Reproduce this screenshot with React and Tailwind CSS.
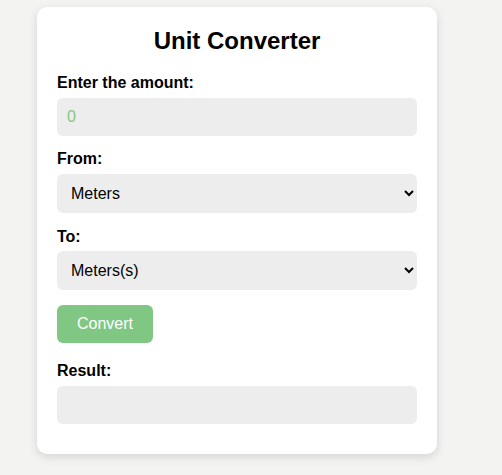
import { useState } from "react";

export default function App() {
    const [amount, setAmount] = useState("");
    const [from, setFrom] = useState("meters");
    const [to, setTo] = useState("meters");
    const [result, setResult] = useState("");

    const convert = () => {
        setResult(amount ? `${amount} Meters(s)` : "");
    };

    return (
        <div className="min-h-[475px] w-full bg-[#f3f3f2] pt-[7px] pl-[37px] font-['Liberation_Sans',Arial,sans-serif] text-black">
            <div className="w-[400px] rounded-[10px] bg-white px-5 pt-5 pb-[30px] shadow-[0_3px_10px_rgba(0,0,0,0.13)]">
                <h2 className="h-7 text-center text-2xl font-bold leading-7">Unit Converter</h2>

                <label className="mt-[19px] block h-[18px] text-base font-bold leading-[18px]">
                    Enter the amount:
                </label>
                <input
                    type="number"
                    placeholder="0"
                    value={amount}
                    onChange={(e) => setAmount(e.target.value)}
                    className="mt-[6px] block h-[38px] w-full rounded-md bg-[#ededed] px-[10px] text-base text-[#81c784] outline-none placeholder:text-[#81c784]"
                />

                <label className="mt-[14px] block h-[18px] text-base font-bold leading-[18px]">From:</label>
                <select
                    value={from}
                    onChange={(e) => setFrom(e.target.value)}
                    className="mt-[6px] block h-[39px] w-full rounded-md bg-[#ededed] px-[10px] text-base outline-none"
                >
                    <option value="meters">Meters</option>
                    <option value="kilometers">Kilometers</option>
                    <option value="feet">Feet</option>
                </select>

                <label className="mt-[15px] block h-[18px] text-base font-bold leading-[18px]">To:</label>
                <select
                    value={to}
                    onChange={(e) => setTo(e.target.value)}
                    className="mt-[5px] block h-[39px] w-full rounded-md bg-[#ededed] px-[10px] text-base outline-none"
                >
                    <option value="meters">Meters(s)</option>
                    <option value="kilometers">Kilometers(s)</option>
                    <option value="feet">Feet(s)</option>
                </select>

                <button
                    onClick={convert}
                    className="mt-[15px] block h-[38px] w-24 rounded-md bg-[#81c784] text-base text-white"
                >
                    Convert
                </button>

                <label className="mt-[19px] block h-[18px] text-base font-bold leading-[18px]">Result:</label>
                <div className="mt-[6px] h-[38px] w-full rounded-md bg-[#ededed] px-[10px] leading-[38px]">
                    {result}
                </div>
            </div>
        </div>
    );
}
